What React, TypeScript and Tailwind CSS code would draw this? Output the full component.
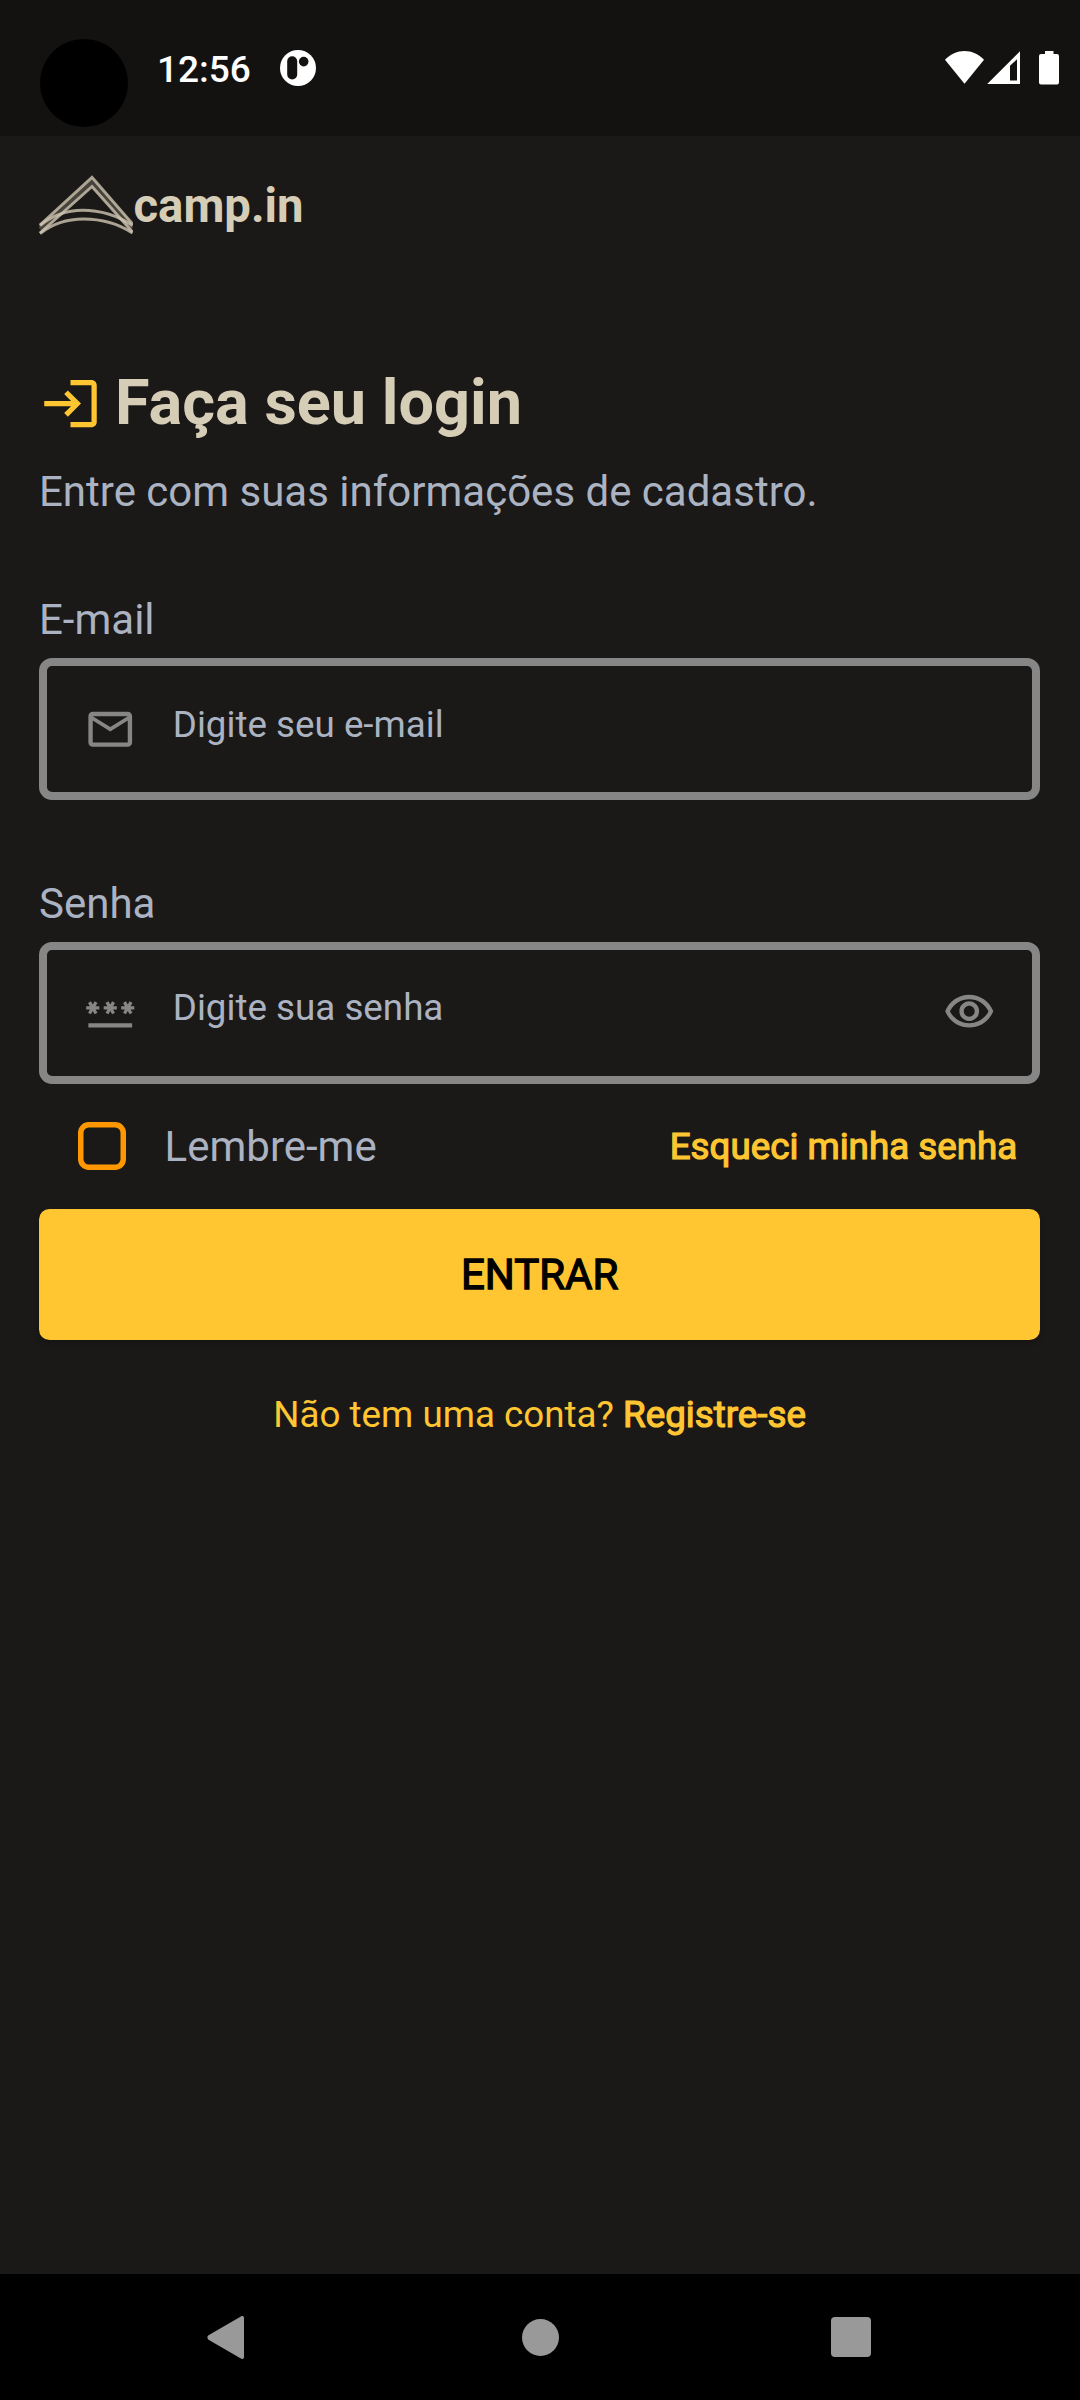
import React from "react";

type IconProps = { d: string; className: string };

function Icon({ d, className }: IconProps) {
  return (
    <svg viewBox="0 0 24 24" fill="currentColor" className={className} aria-hidden="true">
      <path d={d} />
    </svg>
  );
}

const LOGIN =
  "M11 7L9.6 8.4l2.6 2.6H2v2h10.2l-2.6 2.6L11 17l5-5-5-5zm9 12h-8v2h8c1.1 0 2-.9 2-2V5c0-1.1-.9-2-2-2h-8v2h8v14z";
const MAIL =
  "M22 6c0-1.1-.9-2-2-2H4c-1.1 0-2 .9-2 2v12c0 1.1.9 2 2 2h16c1.1 0 2-.9 2-2V6zm-2 0l-8 5-8-5h16zm0 12H4V8l8 5 8-5v10z";
const PASSWORD =
  "M2 17h20v2H2v-2zm1.15-4.05L4 11.47l.85 1.48 1.3-.75-.85-1.48H7v-1.5H5.3l.85-1.47L4.85 7 4 8.47 3.15 7l-1.3.75.85 1.47H1v1.5h1.7l-.85 1.48 1.3.75zm6.7-.75l1.3.75.85-1.48.85 1.48 1.3-.75-.85-1.48H15v-1.5h-1.7l.85-1.47-1.3-.75L12 8.47 11.15 7l-1.3.75.85 1.47H9v1.5h1.7l-.85 1.48zM23 9.22h-1.7l.85-1.47-1.3-.75L20 8.47 19.15 7l-1.3.75.85 1.47H17v1.5h1.7l-.85 1.48 1.3.75.85-1.48.85 1.48 1.3-.75-.85-1.48H23v-1.5z";
const EYE =
  "M12 6c3.79 0 7.17 2.13 8.82 5.5C19.17 14.87 15.79 17 12 17s-7.17-2.13-8.82-5.5C4.83 8.13 8.21 6 12 6m0-2C7 4 2.73 7.11 1 11.5 2.73 15.89 7 19 12 19s9.27-3.11 11-7.5C21.27 7.11 17 4 12 4zm0 5c1.38 0 2.5 1.12 2.5 2.5S13.38 14 12 14s-2.5-1.12-2.5-2.5S10.62 9 12 9m0-2c-2.48 0-4.5 2.02-4.5 4.5S9.52 16 12 16s4.5-2.02 4.5-4.5S14.48 7 12 7z";

function StatusBar() {
  return (
    <header className="flex h-[136px] items-start bg-[#131210] pl-10 text-white">
      <div className="mt-[39px] size-[88px] rounded-full bg-black" />
      <span className="mt-12 ml-[29px] w-[94px] text-[37px] leading-[43px] font-medium whitespace-nowrap">
        12:56
      </span>
      <svg viewBox="0 0 36 36" className="mt-[50px] ml-[29px] size-9" aria-hidden="true">
        <circle cx="18" cy="18" r="18" fill="#fff" />
        <rect x="7.2" y="6.3" width="10" height="23.2" rx="5" fill="#131210" />
        <circle cx="23.7" cy="11.6" r="4.8" fill="#131210" />
      </svg>
      <div className="mt-[51px] mr-[21px] ml-auto flex items-start">
        <svg viewBox="0 0 39 33" className="h-[33px] w-[39px]" fill="#fff" aria-hidden="true">
          <path d="M19.5 32.8L0 8.8C5.4 3 12.4 0 19.5 0S33.6 3 39 8.8Z" />
        </svg>
        <svg viewBox="0 0 33 33" className="ml-[3px] h-[33px] w-[33px]" fill="#fff" aria-hidden="true">
          <path fillRule="evenodd" d="M.2 33H33V.2ZM23 14.8L30 8.2V29.5H23Z" />
        </svg>
        <svg viewBox="0 0 20 34" className="ml-[19px] h-[34px] w-5" fill="#fff" aria-hidden="true">
          <path d="M6 0h8.5v3H18q2 0 2 2v26.5q0 2-2 2H2q-2 0-2-2V5q0-2 2-2h4Z" />
        </svg>
      </div>
    </header>
  );
}

function Logo() {
  return (
    <svg
      viewBox="0 0 94 62"
      className="mt-[39px] h-[62px] w-[94px] blur-[0.6px]"
      fill="none"
      stroke="#cfc6b1"
      strokeOpacity="0.8"
      strokeWidth="3"
      aria-hidden="true"
    >
      <path d="M1 54L53 7.3L93.5 53" strokeOpacity="0.25" strokeWidth="6" />
      <path d="M1 50L53 2.3L93.5 49" />
      <path d="M1 58L53 11.5L93.5 57" />
      <path d="M1 50.5C14 40 28 35.3 43.7 35.3C62 35.3 79 41 93.5 50.5" />
      <path d="M1 58.5C15 47.5 29 44 44.5 44C62 44 79 48.5 93.5 58" />
    </svg>
  );
}

type FieldProps = { label: string; placeholder: string; icon: string; trailing?: boolean };

function Field({ label, placeholder, icon, trailing }: FieldProps) {
  return (
    <label className="block">
      <span className="block text-[42px] leading-[49px]">{label}</span>
      <span className="mt-[14px] flex h-[141.75px] items-center rounded-[13px] border-8 border-[#868686] pr-[37px] pl-[36.5px] text-[#868686]">
        <Icon d={icon} className="size-[52.5px] shrink-0" />
        <span className="mb-[9.5px] ml-[36.8px] grow text-[36.75px] leading-[43px] text-[#abb3c2]">
          {placeholder}
        </span>
        {trailing && <Icon d={EYE} className="size-[52.5px] shrink-0" />}
      </span>
    </label>
  );
}

function NavBar() {
  return (
    <nav className="flex h-[126px] items-center bg-black pl-[207px] text-[#999]">
      <svg viewBox="0 0 37 43" className="h-[43px] w-[37px]" fill="currentColor" aria-hidden="true">
        <path d="M33 .9Q37-1.6 37 2.5V40.5Q37 44.6 33 42.1L1.5 23.7Q-.8 21.5 1.5 19.3Z" />
      </svg>
      <div className="ml-[277.5px] size-[37px] rounded-full bg-[#999]" />
      <div className="ml-[272.5px] size-10 rounded-[4px] bg-[#999]" />
    </nav>
  );
}

export default function App() {
  return (
    <div className="flex h-[2400px] w-[1080px] flex-col overflow-hidden bg-[#1a1917] font-[Roboto,sans-serif] text-[#abb3c2]">
      <StatusBar />
      <main className="flex grow flex-col pr-[39.75px] pl-[39px]">
        <div className="flex items-start">
          <Logo />
          <span className="mt-[42px] ml-[0.5px] text-[47.25px] leading-[56px] font-bold text-[#d6cdb7]">camp.in</span>
        </div>
        <div className="mt-[129px] flex items-start">
          <Icon d={LOGIN} className="mt-[6px] size-[63px] text-[#ffc632]" />
          <h1 className="ml-[13px] text-[63px] leading-[73px] font-bold text-[#d6cdb7]">Faça seu login</h1>
        </div>
        <p className="mt-[28px] text-[42px] leading-[49px]">Entre com suas informações de cadastro.</p>
        <div className="mt-[79px]">
          <Field label="E-mail" placeholder="Digite seu e-mail" icon={MAIL} />
        </div>
        <div className="mt-[79px]">
          <Field label="Senha" placeholder="Digite sua senha" icon={PASSWORD} trailing />
        </div>
        <div className="mt-[38.5px] flex h-[49px] items-start pr-[23px] pl-[39px]">
          <svg viewBox="0 0 48 48" className="size-12" fill="none" stroke="#ff9800" strokeWidth="5.5" aria-hidden="true">
            <rect x="2.75" y="2.75" width="42.5" height="42.5" rx="8" />
          </svg>
          <span className="ml-[38.6px] text-[42px] leading-[49px]">Lembre-me</span>
          <a className="mt-[3px] ml-auto text-[36.75px] leading-[43px] text-[#ffc632] [-webkit-text-stroke:1.2px_#ffc632]">
            Esqueci minha senha
          </a>
        </div>
        <button className="mt-[38px] flex h-[131.25px] shrink-0 items-center justify-center rounded-[10.5px] bg-[#ffc632] text-[42px] leading-[49px] text-black shadow-[0_4px_6px_rgba(0,0,0,0.2)] [-webkit-text-stroke:1.3px_black]">
          ENTRAR
        </button>
        <p className="mt-[52.5px] text-center text-[36.75px] leading-[43px] text-[#ffc632]">
          Não tem uma conta? <span className="[-webkit-text-stroke:1.2px_#ffc632]">Registre-se</span>
        </p>
      </main>
      <NavBar />
    </div>
  );
}
